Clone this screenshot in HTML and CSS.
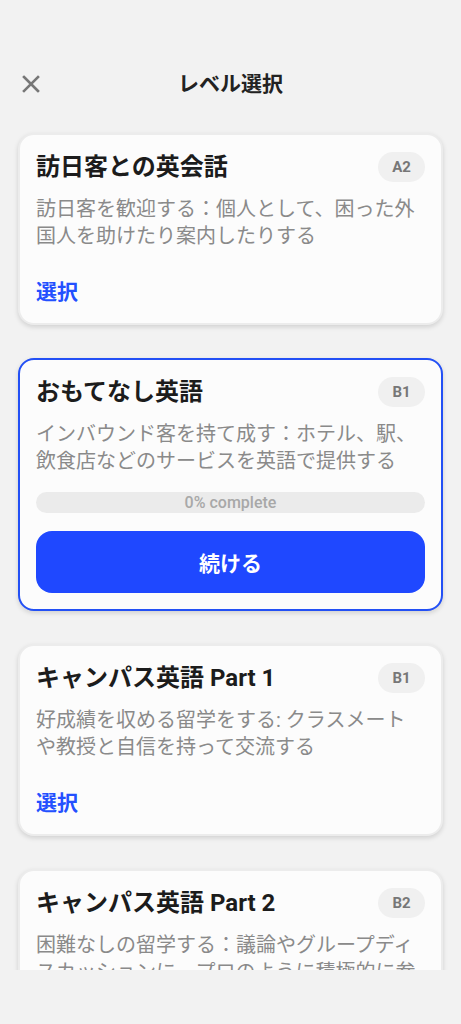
FILE: index.html
```html
<!DOCTYPE html>
<html lang="ja">
<head>
  <meta charset="UTF-8" />
  <meta name="viewport" content="width=device-width, initial-scale=1.0"/>
  <title>レベル選択</title>
  <link rel="stylesheet" href="styles.css">
</head>
<body>
  <header class="topbar">
    <button class="close-btn" aria-label="閉じる">
      <svg width="18" height="18" viewBox="0 0 18 18">
        <path d="M2 2 L16 16 M16 2 L2 16" stroke="#777" stroke-width="2.6" stroke-linecap="square" fill="none"/>
      </svg>
    </button>
    <h1 class="topbar-title">レベル選択</h1>
  </header>

  <main class="level-list">
    <section class="level-card">
      <div class="card-head">
        <h2 class="card-title">訪日客との英会話</h2>
        <span class="badge">A2</span>
      </div>
      <p class="card-desc">訪日客を歓迎する：個人として、困った外国人を助けたり案内したりする</p>
      <a class="select-link" href="#">選択</a>
    </section>

    <section class="level-card active">
      <div class="card-head">
        <h2 class="card-title">おもてなし英語</h2>
        <span class="badge">B1</span>
      </div>
      <p class="card-desc">インバウンド客を持て成す：ホテル、駅、飲食店などのサービスを英語で提供する</p>
      <div class="progress">
        <div class="progress-fill" style="width: 0%"></div>
        <span class="progress-label">0% complete</span>
      </div>
      <button class="continue-btn">続ける</button>
    </section>

    <section class="level-card">
      <div class="card-head">
        <h2 class="card-title">キャンパス英語 Part 1</h2>
        <span class="badge">B1</span>
      </div>
      <p class="card-desc">好成績を収める留学をする: クラスメートや教授と自信を持って交流する</p>
      <a class="select-link" href="#">選択</a>
    </section>

    <section class="level-card">
      <div class="card-head">
        <h2 class="card-title">キャンパス英語 Part 2</h2>
        <span class="badge">B2</span>
      </div>
      <p class="card-desc">困難なしの留学する：議論やグループディスカッションに、プロのように積極的に参加する</p>
    </section>
  </main>
</body>
</html>
```

FILE: styles.css
```css
body {
  margin: 0;
  background: #f2f2f2;
  font-family: Roboto, "Noto Sans CJK JP", sans-serif;
  color: #1c1c1c;
}

.topbar {
  position: relative;
  height: 44px;
  padding-top: 62px;
  display: flex;
  align-items: center;
  justify-content: center;
}

.close-btn {
  position: absolute;
  left: 22px;
  top: 75px;
  width: 18px;
  height: 18px;
  padding: 0;
  border: none;
  background: none;
  display: flex;
}

.topbar-title {
  margin: 0;
  font-size: 21px;
  font-weight: 700;
  line-height: 28px;
  color: #222;
}

.level-list {
  height: 837px;
  overflow: hidden;
  padding: 27px 18px 0;
  display: flex;
  flex-direction: column;
  gap: 33px;
}

.level-card {
  flex-shrink: 0;
  background: #fcfcfc;
  border: 2px solid #ececec;
  border-radius: 16px;
  padding: 17px 16px 17px;
  box-shadow: 0 2px 5px rgba(0, 0, 0, 0.14);
  display: flex;
  flex-direction: column;
}

.level-card.active {
  border-color: #2350f5;
  padding-bottom: 16px;
}

.card-head {
  display: flex;
  align-items: center;
  justify-content: space-between;
  height: 30px;
}

.card-title {
  margin: 0;
  font-size: 24px;
  font-weight: 700;
  line-height: 30px;
  color: #1c1c1c;
}

.badge {
  height: 30px;
  width: 47px;
  border-radius: 15px;
  background: #f0f0f0;
  color: #777;
  font-size: 15px;
  font-weight: 700;
  display: flex;
  align-items: center;
  justify-content: center;
}

.card-desc {
  margin: 14px 0 0;
  font-size: 20px;
  line-height: 27px;
  color: #8a8a8a;
}

.select-link {
  margin-top: 28px;
  font-size: 21px;
  font-weight: 700;
  line-height: 28px;
  color: #2350ff;
  text-decoration: none;
  align-self: flex-start;
}

.progress {
  position: relative;
  margin-top: 17px;
  height: 21px;
  border-radius: 11px;
  background: #ebebeb;
  overflow: hidden;
}

.progress-fill {
  height: 100%;
  background: #2048ff;
}

.progress-label {
  position: absolute;
  inset: 0;
  display: flex;
  align-items: center;
  justify-content: center;
  font-size: 16px;
  font-weight: 500;
  color: #a8a8a8;
}

.continue-btn {
  margin-top: 18px;
  height: 62px;
  border: none;
  border-radius: 16px;
  background: #1f48ff;
  color: #fff;
  font-family: Roboto, "Noto Sans CJK JP", sans-serif;
  font-size: 21px;
  font-weight: 700;
}
```
